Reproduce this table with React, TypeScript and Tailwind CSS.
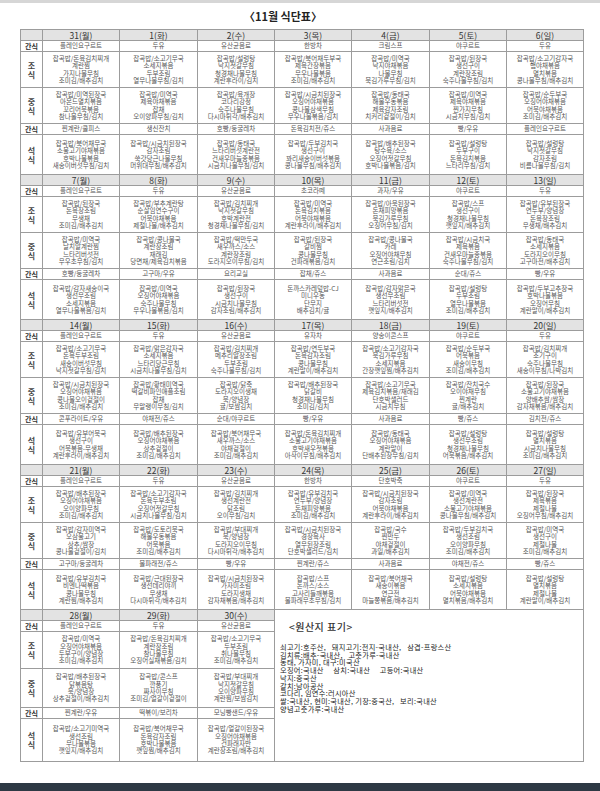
import React from "react";

type Day = { h: string; s1: string; b: string[]; l: string[]; s2: string; dn: string[] };

const d = (h: string, s1: string, b: string, l: string, s2: string, dn: string): Day => ({
  h,
  s1,
  b: b.split(","),
  l: l.split(","),
  s2,
  dn: dn.split(","),
});

const weeks: Day[][] = [
  [
    d("31(월)", "플레인요구르트", "잡곡밥/돈육김치찌개,계란찜,가지나물무침,조미김/배추김치", "잡곡밥/미역된장국,아몬드멸치볶음,꼬리어묵볶음,참나물무침/김치", "찐계란/쿨피스", "잡곡밥/북어채무국,소불고기야채볶음,호박나물볶음,새송이버섯무침/김치"),
    d("1(화)", "두유", "잡곡밥/소고기무국,소세지볶음,두부조림,열무나물무침/김치", "잡곡밥/미역국,제육야채볶음,잡채,오이양파무침/김치", "생신잔치", "잡곡밥/시금치된장국,감자조림,쑥갓당근나물무침,머위대무침/배추김치"),
    d("2(수)", "유산균음료", "잡곡밥/설렁탕,낙지젓갈무침,청경채나물무침,계란후라이/김치", "잡곡밥/육개장,코다리강정,숙주나물무침,다시마튀각/배추김치", "호빵/둥굴레차", "잡곡밥/동태국,느타리버섯계란전,건새우마늘종볶음,시금치나물무침/김치"),
    d("3(목)", "한방차", "잡곡밥/북어채두부국,제육간장볶음,무우나물볶음,조미김/배추김치", "잡곡밥/시금치된장국,오징어야채볶음,콩나물삼색무침,무우나물볶음/김치", "돈육김치전/쥬스", "잡곡밥/두부김치국,생선구이,꽈리새송이버섯볶음,콩나물무침/배추김치"),
    d("4(금)", "크림스프", "잡곡밥/미역국,낙지야채볶음,나물무침,묵김가루무침/김치", "잡곡밥/동태국,해물우동볶음,제육감자조림,치커리겉절이/김치", "사과음료", "잡곡밥/배추된장국,탕수육/소스,오징어젓갈무침,호박나물볶음/김치"),
    d("5(토)", "야쿠르트", "잡곡밥/된장국,생선구이,계란장조림,숙주나물무침/김치", "잡곡밥/미역국,제육야채볶음,찐가지무침,시금치무침/김치", "빵/우유", "잡곡밥/설렁탕,두부구이,돈육김치볶음,느타리무침/김치"),
    d("6(일)", "두유", "잡곡밥/소고기감자국,햄야채볶음,멸치볶음,콩나물무침/배추김치", "잡곡밥/순두부국,오징어야채볶음,어묵야채볶음,조미김/배추김치", "플레인요구르트", "잡곡밥/설렁탕,낙지젓갈무침,감자조림,비름나물무침/김치"),
  ],
  [
    d("7(월)", "플레인요구르트", "잡곡밥/된장국,돈육장조림,무생채,조미김/배추김치", "잡곡밥/미역국,날치알계란찜,느타리버섯전,무우초무침/김치", "호빵/둥굴레차", "잡곡밥/감자새송이국,생선무조림,소세지볶음,열무나물볶음/김치"),
    d("8(화)", "두유", "잡곡밥/부추계란탕,순살임연수구이,어묵야채볶음,제철나물/배추김치", "잡곡밥/콩나물국,계란장조림,재래김,당면채/제육김치볶음", "고구마/우유", "잡곡밥/미역국,오징어야채볶음,숙주나물무침,무우나물볶음/김치"),
    d("9(수)", "유산균음료", "잡곡밥/김치찌개,낙지젓갈무침,호박계란전,청경채나물무침/김치", "잡곡밥/떡만두국,새우까스/소스,계란장조림,도라지오이무침/김치", "요리교실", "잡곡밥/된장국,생선구이,시금치나물무침,감자조림/배추김치"),
    d("10(목)", "초코라떼", "잡곡밥/미역국,돈육김치볶음,어묵야채볶음,계란후라이/배추김치", "잡곡밥/된장국,갈비찜,콩나물무침,건파래볶음/김치", "잡채/쥬스", "돈까스카레덮밥-CJ,미니우동,단무지,배추김치/귤"),
    d("11(금)", "과자/우유", "잡곡밥/아욱된장국,돈채피망볶음,묵김가루무침,오징어무침/김치", "잡곡밥/콩나물국,카레,오징어야채무침,연근조림/김치", "사과음료", "잡곡밥/감자맑은국,생선무조림,느타리버섯전,깻잎지/배추김치"),
    d("12(토)", "야쿠르트", "잡곡밥/스프,생선구이,청경채나물무침,깻잎지/배추김치", "잡곡밥/시금치국,제육볶음,건새우마늘종볶음,숙주나물무침/김치", "순대/쥬스", "잡곡밥/설렁탕,두부조림,열무나물볶음,조미김/배추김치"),
    d("13(일)", "두유", "잡곡밥/유부된장국,연두부/양념장,돈육장조림,무생채/배추김치", "잡곡밥/동태국,소세지볶음,도라지오이무침,고구마전/배추김치", "빵/우유", "잡곡밥/두부고추장국,호박나물볶음,오징어무침,계란말이/배추김치"),
  ],
  [
    d("14(월)", "플레인요구르트", "잡곡밥/소고기무국,돈육두부조림,새송이버섯무침,낙지젓갈무침/김치", "잡곡밥/시금치된장국,오징어야채볶음,콩나물오이겉절이,조미김/배추김치", "콘푸라이트/우유", "잡곡밥/유부어묵국,생선구이,어묵볶음-무생채,계란후라이/배추김치"),
    d("15(화)", "두유", "잡곡밥/맑은감자국,소세지볶음,느타리당근무침,시금치나물무침/김치", "잡곡밥/황태미역국,떡갈비파인애플조림,잡채,무말랭이무침/김치", "야채전/쥬스", "잡곡밥/배추된장국,오징어야채볶음,상추겉절이,조미김/배추김치"),
    d("16(수)", "유산균음료", "잡곡밥/김치찌개,메추리알장조림,두부조림,숙주나물무침/김치", "잡곡밥/닭죽,도라지오이생채,묵/양념장,귤/보쌈김치", "순대/야쿠르트", "잡곡밥/북어채무국,새우까스/소스,야채겉절이,조미김/배추김치"),
    d("17(목)", "유자차", "잡곡밥/연두부국,돈육감자조림,콩나물무침,계란말이/배추김치", "잡곡밥/배추된장국,닭갈비,청경채나물무침,조미김/김치", "빵/우유", "잡곡밥/돈육김치찌개,소불고기야채볶음,호박새우젓볶음,아삭이무침/배추김치"),
    d("18(금)", "양송이콘스프", "잡곡밥/소고기감자국,묵김가루무침,소세지볶음,간장깻잎찜/배추김치", "잡곡밥/소고기무국,제육김치볶음/재래김,단호박샐러드,시금치무침", "사과음료", "잡곡밥/동태국,오징어야채볶음,계란말이,단배추된장무침/김치"),
    d("19(토)", "야쿠르트", "잡곡밥/순두부국,어묵볶음,새송이무침,조미김/배추김치", "잡곡밥/잔치국수,오이야채무침,찐계란,귤/배추김치", "빵/쥬스", "잡곡밥/설렁탕,생선무조림,청경채나물무침,어묵볶음/배추김치"),
    d("20(일)", "두유", "잡곡밥/김치찌개,조기구이,숙주나물무침,새송이무침/나박김치", "잡곡밥/된장국,소불고기야채볶음,양배추쌈/쌈장,감자채볶음/배추김치", "김치전/쥬스", "잡곡밥/설렁탕,멸치볶음,시금치나물무침,조미김/배추김치"),
  ],
  [
    d("21(월)", "플레인요구르트", "잡곡밥/배추된장국,오징어야채볶음,오이양파무침,조미김/배추김치", "잡곡밥/감자미역국,오삼불고기,상추/쌈장,콩나물겉절이/김치", "고구마/둥굴레차", "잡곡밥/유부김치국,비엔나떡볶음,콩나물무침,계란찜/배추김치"),
    d("22(화)", "두유", "잡곡밥/소고기감자국,돈육두부조림,오징어젓갈무침,시금치나물무침/김치", "잡곡밥/도토리묵국,해물우동볶음,어묵볶음,조미김/배추김치", "물파래전/쥬스", "잡곡밥/근대된장국,생선데리야끼,무생채,다시마튀각/배추김치"),
    d("23(수)", "유산균음료", "잡곡밥/김치찌개,생선계란전,닭조림,오이무침/김치", "잡곡밥/부대찌개,묵/양념장,도라지오이무침,다시마튀각/배추김치", "빵/우유", "잡곡밥/시금치된장국,가자미조림,도라지생채,감자채볶음/배추김치"),
    d("24(목)", "한방차", "잡곡밥/유부김치국,연두부/양념장,돈채피망볶음,조미김/배추김치", "잡곡밥/시금치된장국,경장육사,열무된장조림,단호박샐러드/김치", "찐계란/쥬스", "잡곡밥/스프,돈까스/소스,고사리들깨볶음,물파래무초무침/김치"),
    d("25(금)", "단호박죽", "잡곡밥/시금치된장국,감자조림,어묵야채볶음,계란후라이/배추김치", "잡곡밥/국수,찐만두,야채겉절이,과일/배추김치", "사과음료", "잡곡밥/북어채국,새송이볶음,연근전,마늘쫑볶음/배추김치"),
    d("26(토)", "야쿠르트", "잡곡밥/미역국,생선계란전,소불고기야채볶음,콩나물무침/배추김치", "잡곡밥/두부김치국,생선조림,오이양파무침,조미김/배추김치", "야채전/쥬스", "잡곡밥/설렁탕,소세지볶음,어묵야채볶음,멸치볶음/배추김치"),
    d("27(일)", "두유", "잡곡밥/된장국,제육볶음,제철나물,오징어무침/배추김치", "잡곡밥/미역국,생선구이,제철나물,조미김/배추김치", "빵/쥬스", "잡곡밥/설렁탕,멸치볶음,제철나물,계란말이/배추김치"),
  ],
];

const lastWeek: Day[] = [
  d("28(월)", "플레인요구르트", "잡곡밥/미역국,오징어야채볶음,두부구이/양념장,조미김/배추김치", "잡곡밥/배추된장국,닭볶음탕,묵/양념장,상추겉절이/배추김치", "찐계란/우유", "잡곡밥/소고기미역국,생선조림,무나물볶음,깻잎지/배추김치"),
  d("29(화)", "두유", "잡곡밥/돈육김치찌개,계란장조림,참나물무침,오징어실채볶음/김치", "잡곡밥/콘스프,깐풍기,짜사이무침,조미김/얼갈이겉절이", "떡볶이/보리차", "잡곡밥/북어채무국,돈육감자조림,호박나물볶음,깻잎찜/배추김치"),
  d("30(수)", "유산균음료", "잡곡밥/소고기무국,두부조림,취나물무침,조미김/배추김치", "잡곡밥/부대찌개,낙지젓갈무침,오이양파무침,계란찜/보쌈김치", "모닝빵샌드/우유", "잡곡밥/얼갈이된장국,오징어야채볶음,건파래자반,계란장조림/배추김치"),
];

const origin = [
  "쇠고기:호주산,   돼지고기:전지-국내산,   삼겹-프랑스산",
  "김치류:배추-국내산,   고춧가루-국내산",
  "동태, 가자미, 대구:미국산",
  "오징어:국내산     삼치:국내산     고등어:국내산",
  "낙지:중국산",
  "갈치:남아공산",
  "코다리, 임연수:러시아산",
  "쌀:국내산, 현미:국내산, 기장:중국산,   보리:국내산",
  "양념고춧가루:국내산",
];

const colW = ["w-[77px]", "w-[78px]", "w-[77px]", "w-[77px]", "w-[78px]", "w-[77px]", "w-[77px]"];
const box = "shrink-0 border-r border-b border-[#9c9c9c] flex flex-col items-center justify-center whitespace-nowrap";
const menu = "text-[6.5px] leading-[7.4px] text-[#555]";

// row heights: header, snack, breakfast, lunch, snack, dinner
const normalRows = ["h-[11px]", "h-[11px]", "h-[36px]", "h-[36px]", "h-[11px]", "h-[40px]"];
const lastRows = ["h-[11px]", "h-[11px]", "h-[37px]", "h-[39px]", "h-[11px]", "h-[43px]"];

function Label({ text, stacked = false }: { text: string; stacked?: boolean }) {
  if (!stacked) {
    return <div className={`${box} w-[22px] text-[7px] leading-[9px] font-bold text-[#333]`}>{text}</div>;
  }
  return (
    <div className={`${box} w-[22px] text-[8px] leading-[9px] font-semibold text-[#444]`}>
      <div>{text[0]}</div>
      <div>{text[1]}</div>
    </div>
  );
}

function Row({ h, label, stacked, items }: { h: string; label: string; stacked?: boolean; items: string[][] }) {
  return (
    <div className={`flex ${h}`}>
      <Label text={label} stacked={stacked} />
      {items.map((lines, i) => (
        <div key={i} className={`${box} ${colW[i]} ${menu}`}>
          {lines.map((t, j) => (
            <div key={j}>{t}</div>
          ))}
        </div>
      ))}
    </div>
  );
}

function Week({ days, rows }: { days: Day[]; rows: string[] }) {
  return (
    <div className="flex flex-col">
      <div className={`flex ${rows[0]} bg-[#e3e3e3]`}>
        <div className={`${box} w-[22px]`} />
        {days.map((x, i) => (
          <div key={x.h} className={`${box} ${colW[i]} text-[8.5px] leading-[10px] text-[#333]`}>
            {x.h}
          </div>
        ))}
      </div>
      <Row h={rows[1]} label="간식" items={days.map((x) => [x.s1])} />
      <Row h={rows[2]} label="조식" stacked items={days.map((x) => x.b)} />
      <Row h={rows[3]} label="중식" stacked items={days.map((x) => x.l)} />
      <Row h={rows[4]} label="간식" items={days.map((x) => [x.s2])} />
      <Row h={rows[5]} label="석식" stacked items={days.map((x) => x.dn)} />
    </div>
  );
}

export default function App() {
  return (
    <div className="w-[600px] h-[791px] bg-white flex flex-col font-['Noto_Sans_CJK_KR','Noto_Sans',sans-serif] overflow-hidden">
      <div className="h-[3px] shrink-0 bg-[#d6d6d6]" />
      <div className="h-[26px] shrink-0 flex items-center justify-center pr-[34px]">
        <span className="text-[11px] leading-[13px] font-bold text-[#222]">〈11월 식단표〉</span>
      </div>
      <div className="ml-[20px] w-[564px] shrink-0 border-t border-l border-[#9c9c9c] flex flex-col">
        {weeks.map((w, i) => (
          <Week key={i} days={w} rows={normalRows} />
        ))}
        <div className="flex">
          <Week days={lastWeek} rows={lastRows} />
          <div className="flex-1 border-r border-b border-[#9c9c9c]">
            <div className="pl-[14px] pt-[11px] text-[10px] leading-[12px] text-[#333] font-medium tracking-[0.5px]">
              &lt;원산지 표기&gt;
            </div>
            <div className="pl-[5px] pt-[11px] text-[7.2px] leading-[7.7px] tracking-[0.3px] text-[#222] whitespace-pre">
              {origin.map((t, i) => (
                <div key={i}>{t}</div>
              ))}
            </div>
          </div>
        </div>
      </div>
      <div className="flex-1" />
      <div className="h-[8px] shrink-0 bg-[#2e3944]" />
    </div>
  );
}
